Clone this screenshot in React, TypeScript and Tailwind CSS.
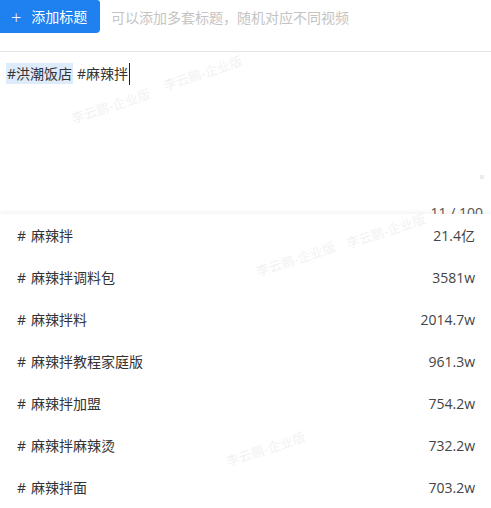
import React from "react";

const items: [string, string][] = [
  ["麻辣拌", "21.4亿"],
  ["麻辣拌调料包", "3581w"],
  ["麻辣拌料", "2014.7w"],
  ["麻辣拌教程家庭版", "961.3w"],
  ["麻辣拌加盟", "754.2w"],
  ["麻辣拌麻辣烫", "732.2w"],
  ["麻辣拌面", "703.2w"],
];

const marks: { left: number; top: number }[] = [
  { left: 70, top: 97 },
  { left: 162, top: 64 },
  { left: 255, top: 250 },
  { left: 345, top: 222 },
  { left: 225, top: 440 },
];

export default function App() {
  return (
    <div
      className="relative w-[491px] h-[508px] overflow-hidden bg-white text-[14px] text-[#333]"
      style={{ fontFamily: '"Open Sans", "Noto Sans CJK SC", sans-serif' }}
    >
      <div className="flex items-start h-[52px] border-b border-[#e4e4e4]">
        <button className="flex items-center h-[33px] w-[100px] pl-[11px] bg-[#1f80f0] text-white rounded-r-[3px] rounded-br-[4px]">
          <span className="text-[18px] leading-none mr-[10px] font-light">+</span>
          <span className="text-[14px]">添加标题</span>
        </button>
        <span className="ml-[11px] mt-[7px] text-[14px] text-[#c4c4c4]">
          可以添加多套标题，随机对应不同视频
        </span>
      </div>

      <div className="relative h-[162px]">
        <div className="pt-[11px] pl-[6px] flex items-start">
          <span className="bg-[#deebfb] px-[1px] h-[21px] leading-[21px]">#洪潮饭店</span>
          <span className="ml-[4px] h-[21px] leading-[21px]">#麻辣拌</span>
          <span className="w-[1px] h-[22px] bg-[#222] ml-[1px]" />
        </div>
        <div className="absolute right-[7px] top-[123px] w-[4px] h-[4px] bg-[#ececec]" />
        <div className="absolute right-[8px] top-[150px] text-[14px] text-[#555]">11 / 100</div>
      </div>

      <div className="absolute left-0 right-0 top-[214px] bg-white shadow-[0_-2px_4px_rgba(0,0,0,0.05)] z-10">
        {items.map(([name, val]) => (
          <div key={name} className="flex items-center justify-between h-[42px] pl-[17px] pr-[16px]">
            <span className="text-[14px] text-[#333]">
              <span className="mr-[5px]">#</span>
              {name}
            </span>
            <span className="text-[14px] text-[#444]">{val}</span>
          </div>
        ))}
      </div>

      <div className="pointer-events-none absolute inset-0 z-20">
        {marks.map((m, i) => (
          <span
            key={i}
            className="absolute text-[13px] text-[#000] opacity-[0.05] whitespace-nowrap -rotate-[18deg]"
            style={{ left: m.left, top: m.top }}
          >
            李云鹏-企业版
          </span>
        ))}
      </div>
    </div>
  );
}
